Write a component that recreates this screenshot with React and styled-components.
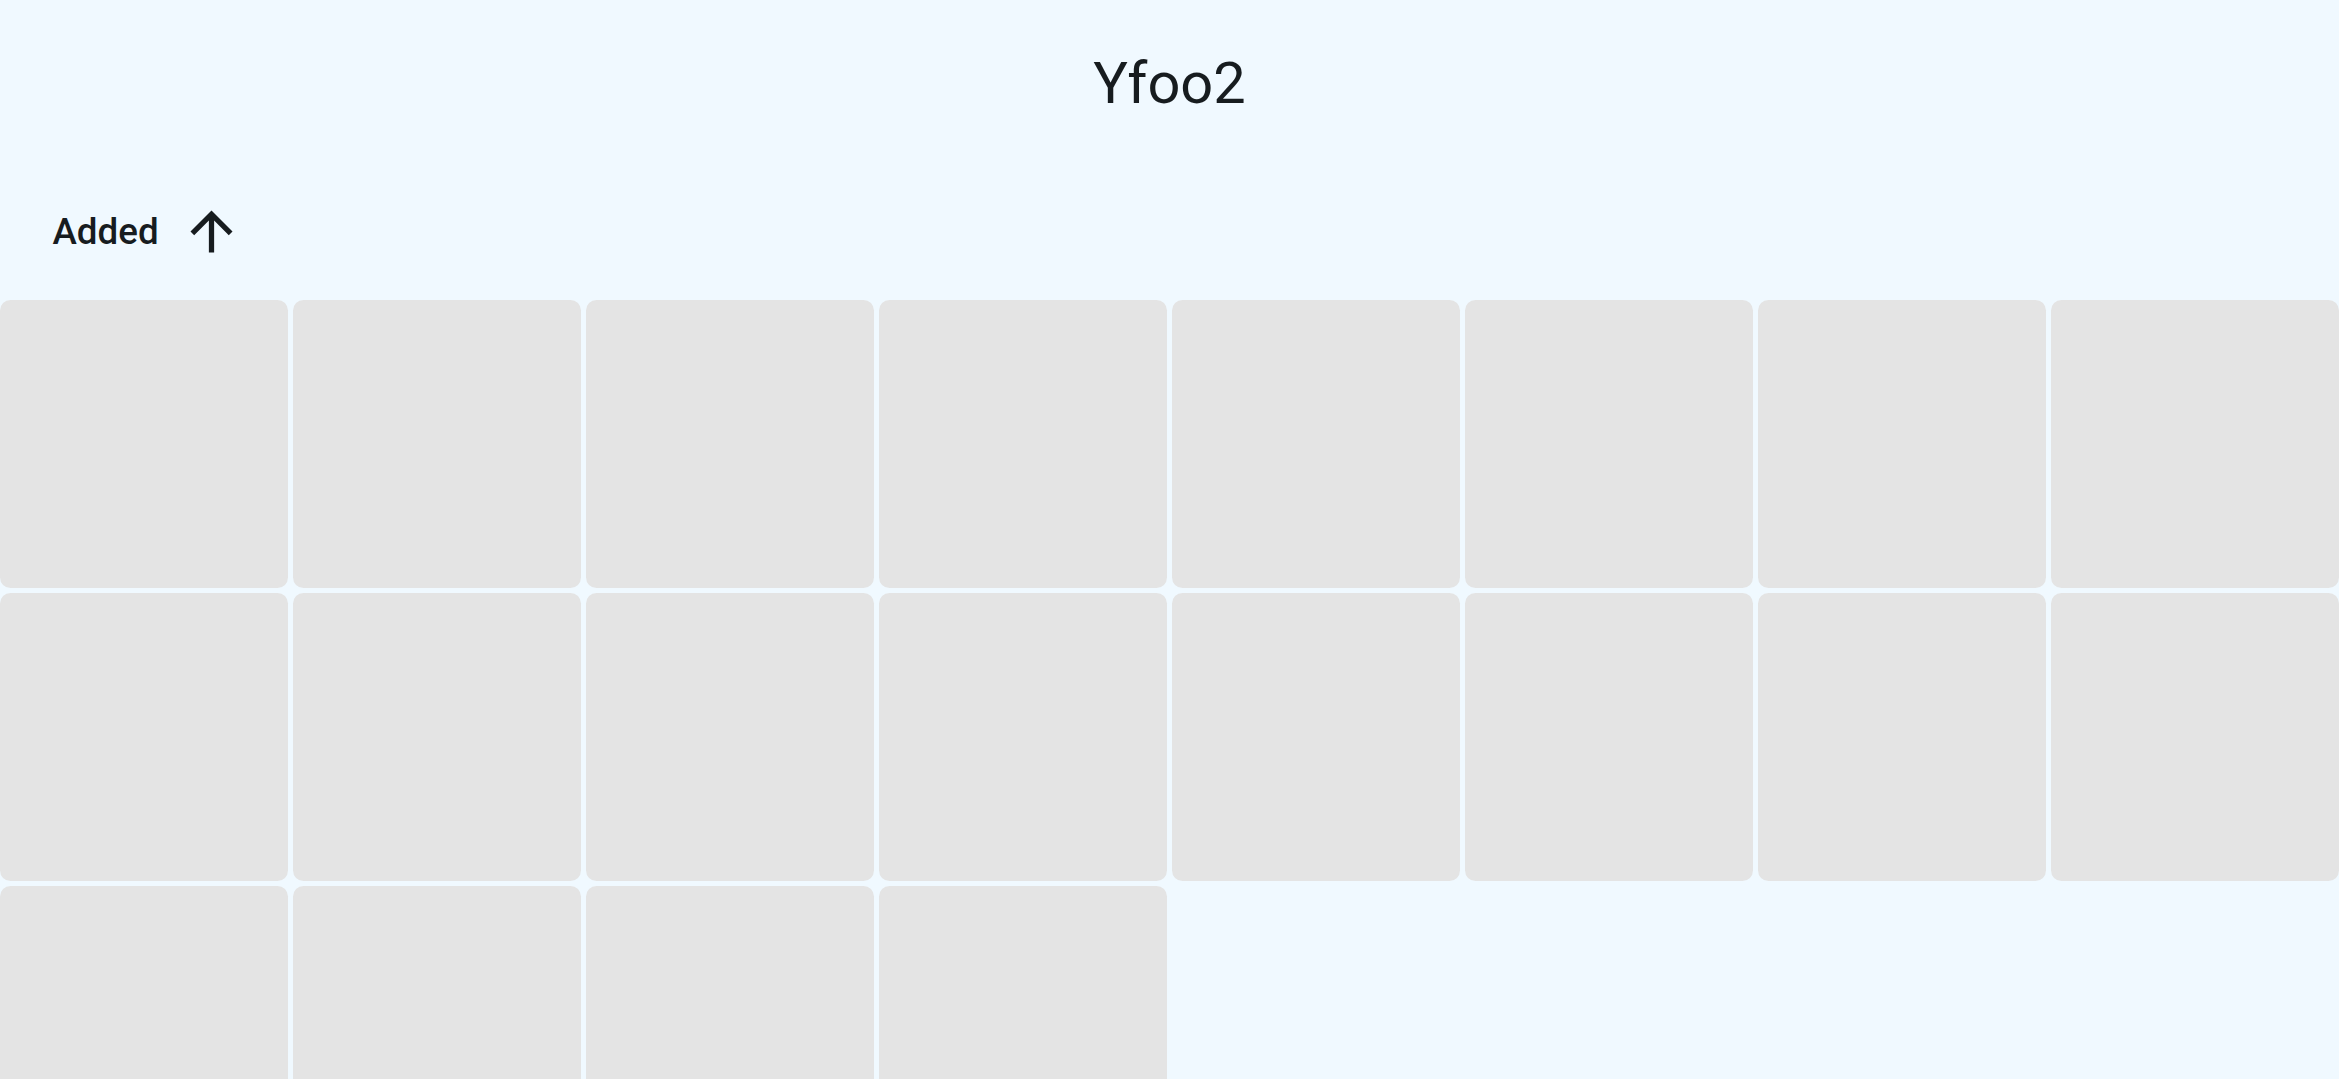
import styled, { createGlobalStyle } from 'styled-components'

const GlobalStyle = createGlobalStyle`
  html, body {
    margin: 0;
    padding: 0;
    background: #f0f9ff;
    font-family: Roboto, "Noto Sans", "Liberation Sans", sans-serif;
    color: #171c1f;
  }
`;

const TILE_COUNT = 20;

function ArrowUpIcon() {
  return (
    <svg width="63" height="63" viewBox="0 0 24 24" fill="currentColor">
      <path d="M4 12l1.41 1.41L11 7.83V20h2V7.83l5.58 5.59L20 12l-8-8-8 8z" />
    </svg>
  )
}

function App() {
  const tiles = Array.from({ length: TILE_COUNT }, (_, i) => i);

  return (
    <Page>
      <GlobalStyle />
      <AppBar>
        <Title>Yfoo2</Title>
      </AppBar>
      <SortBar>
        <SortLabel>Added</SortLabel>
        <IconButton type="button" aria-label="Sort ascending">
          <ArrowUpIcon />
        </IconButton>
      </SortBar>
      <Grid>
        {tiles.map((i) => (
          <Tile key={i} />
        ))}
      </Grid>
    </Page>
  )
}

export default App

const Page = styled.div`
  height: 100vh;
  display: flex;
  flex-direction: column;
  overflow: hidden;
  background: #f0f9ff;
`;

const AppBar = styled.header`
  height: 168px;
  flex-shrink: 0;
  display: flex;
  align-items: center;
  justify-content: center;
`;

const Title = styled.h1`
  margin: 0;
  font-size: 57.75px;
  font-weight: 400;
  line-height: 73.5px;
  color: #171c1f;
`;

const SortBar = styled.div`
  height: 126px;
  flex-shrink: 0;
  display: flex;
  align-items: center;
  padding-left: 52.5px;
  margin-bottom: 6px;
`;

const SortLabel = styled.span`
  font-size: 36.75px;
  font-weight: 500;
  color: #171c1f;
`;

const IconButton = styled.button`
  display: flex;
  align-items: center;
  justify-content: center;
  padding: 21px;
  border: none;
  border-radius: 50%;
  background: transparent;
  color: #171c1f;
  cursor: pointer;
`;

const Grid = styled.div`
  display: grid;
  grid-template-columns: repeat(8, 1fr);
  gap: 5.25px;
`;

const Tile = styled.div`
  aspect-ratio: 1;
  background: #e4e4e4;
  border-radius: 10.5px;
`;
